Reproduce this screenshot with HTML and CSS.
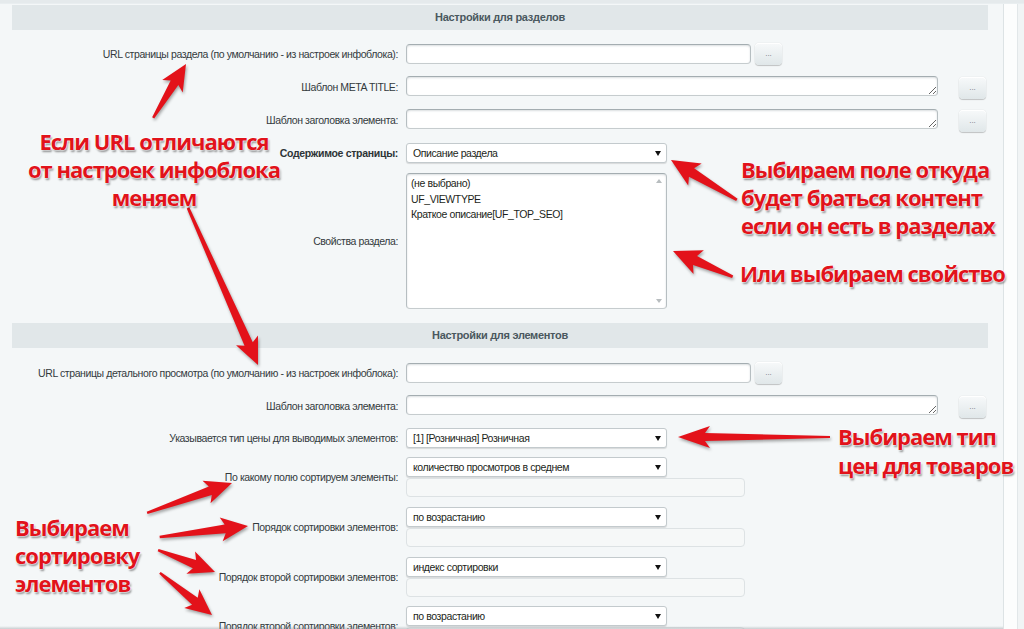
FILE: index.html
```html
<!DOCTYPE html>
<html lang="ru">
<head>
<meta charset="utf-8">
<title>Настройки</title>
<link rel="stylesheet" href="styles.css">
</head>
<body>
<div class="screen">
  <div class="topstrip"></div>
  <div class="body">
    <div class="content">
      <div class="form">
        <div class="heading h1">Настройки для разделов</div>

        <div class="row r-1">
          <div class="label">URL страницы раздела (по умолчанию - из настроек инфоблока):</div>
          <div class="ctrl"><input class="input w-url" type="text"><button class="btn btn-near">...</button></div>
        </div>

        <div class="row r-2">
          <div class="label">Шаблон META TITLE:</div>
          <div class="ctrl top"><textarea class="input area" rows="1"></textarea><button class="btn btn-far">...</button></div>
        </div>

        <div class="row r-3">
          <div class="label">Шаблон заголовка элемента:</div>
          <div class="ctrl top"><textarea class="input area" rows="1"></textarea><button class="btn btn-far">...</button></div>
        </div>

        <div class="row r-4">
          <div class="label bold">Содержимое страницы:</div>
          <div class="ctrl"><div class="select"><span>Описание раздела</span><i class="caret"></i></div></div>
        </div>

        <div class="row r-5">
          <div class="label">Свойства раздела:</div>
          <div class="ctrl">
            <div class="multi">
              <div class="opt">(не выбрано)</div>
              <div class="opt">UF_VIEWTYPE</div>
              <div class="opt">Краткое описание[UF_TOP_SEO]</div>
              <div class="sb"><i class="sb-up"></i><i class="sb-down"></i></div>
            </div>
          </div>
        </div>

        <div class="heading h2">Настройки для элементов</div>

        <div class="row r-6">
          <div class="label">URL страницы детального просмотра (по умолчанию - из настроек инфоблока):</div>
          <div class="ctrl"><input class="input w-url" type="text"><button class="btn btn-near">...</button></div>
        </div>

        <div class="row r-7">
          <div class="label">Шаблон заголовка элемента:</div>
          <div class="ctrl top"><textarea class="input area" rows="1"></textarea><button class="btn btn-far">...</button></div>
        </div>

        <div class="row r-8">
          <div class="label">Указывается тип цены для выводимых элементов:</div>
          <div class="ctrl"><div class="select"><span>[1] [Розничная] Розничная</span><i class="caret"></i></div></div>
        </div>

        <div class="row r-9">
          <div class="label">По какому полю сортируем элементы:</div>
          <div class="ctrl col">
            <div class="select"><span>количество просмотров в среднем</span><i class="caret"></i></div>
            <div class="dis"></div>
          </div>
        </div>

        <div class="row r-10">
          <div class="label">Порядок сортировки элементов:</div>
          <div class="ctrl col">
            <div class="select"><span>по возрастанию</span><i class="caret"></i></div>
            <div class="dis"></div>
          </div>
        </div>

        <div class="row r-11">
          <div class="label">Порядок второй сортировки элементов:</div>
          <div class="ctrl col">
            <div class="select"><span>индекс сортировки</span><i class="caret"></i></div>
            <div class="dis"></div>
          </div>
        </div>

        <div class="row r-12">
          <div class="label">Порядок второй сортировки элементов:</div>
          <div class="ctrl col">
            <div class="select"><span>по возрастанию</span><i class="caret"></i></div>
            <div class="dis"></div>
          </div>
        </div>
      </div>
    </div>
    <div class="side"></div>
  </div>

  <svg class="arrows" width="1024" height="629" viewBox="0 0 1024 629">
    <g fill="#e3121a">
      <path transform="translate(186 64) rotate(121.4)" d="M0,0 L26,-12 L22,-4.5 L63,-1.2 L63,1.2 L22,4.5 L26,12 Z"/>
      <path transform="translate(258 365) rotate(-114)" d="M0,0 L27,-12 L23,-4.5 L172,-1.4 L172,1.4 L23,4.5 L27,12 Z"/>
      <path transform="translate(671 160) rotate(31.2)" d="M0,0 L28,-13 L24,-5 L77,-1.4 L77,1.4 L24,5 L28,13 Z"/>
      <path transform="translate(673 251) rotate(23.4)" d="M0,0 L28,-13 L24,-5 L65,-1.4 L65,1.4 L24,5 L28,13 Z"/>
      <path transform="translate(678 437) rotate(0)" d="M0,0 L32,-11 L27,-4 L152,-1 L152,1 L27,4 L32,11 Z"/>
      <path transform="translate(232 483) rotate(160.6)" d="M0,0 L27,-12 L23,-4.5 L90,-1.2 L90,1.2 L23,4.5 L27,12 Z"/>
      <path transform="translate(248 526) rotate(172.9)" d="M0,0 L27,-12 L23,-4.5 L89,-1.2 L89,1.2 L23,4.5 L27,12 Z"/>
      <path transform="translate(215 572) rotate(-158.9)" d="M0,0 L26,-12 L22,-4.5 L61,-1.2 L61,1.2 L22,4.5 L26,12 Z"/>
      <path transform="translate(212 615) rotate(-141)" d="M0,0 L26,-12 L22,-4.5 L67,-1.2 L67,1.2 L22,4.5 L26,12 Z"/>
    </g>
  </svg>

  <div class="note n-url">Если URL отличаются<br>от настроек инфоблока<br>меняем</div>
  <div class="note n-field">Выбираем поле откуда<br>будет браться контент<br>если он есть в разделах</div>
  <div class="note n-prop">Или выбираем свойство</div>
  <div class="note n-price">Выбираем тип<br>цен для товаров</div>
  <div class="note n-sort">Выбираем<br>сортировку<br>элементов</div>
</div>
</body>
</html>
```

FILE: styles.css
```css
html, body {
  margin: 0;
  padding: 0;
}

body {
  font-family: "Liberation Sans", Arial, sans-serif;
  background: #f4f7f8;
}

.screen {
  position: relative;
  width: 1024px;
  height: 629px;
  overflow: hidden;
  background: #f4f7f8;
}

.screen::after {
  content: "";
  position: absolute;
  left: 0;
  right: 21px;
  bottom: 0;
  height: 3px;
  background: linear-gradient(to bottom, rgba(0, 0, 0, 0), rgba(120, 130, 135, 0.35));
}

.topstrip {
  height: 4px;
  background: #e5eaec;
  border-bottom: 1px solid #e9eef0;
  box-sizing: border-box;
}

.body {
  display: flex;
  height: 625px;
}

.content {
  width: 1003px;
  padding-left: 12px;
  box-sizing: border-box;
}

.form {
  width: 976px;
}

.side {
  flex: 1;
  border-left: 1px solid #dde3e5;
  background: linear-gradient(to right, #fcfdfd 0, #fcfdfd 13px, #e2e7e9 13px, #e2e7e9 14px, #f1f4f5 14px);
}

/* section headings */
.heading {
  height: 25px;
  line-height: 25px;
  background: #e1e7e9;
  text-align: center;
  font-size: 11px;
  font-weight: bold;
  letter-spacing: -0.3px;
  color: #4a585e;
}

.h1 { margin-top: 1px; }
.h2 { margin-top: 14px; }

/* rows */
.row {
  display: grid;
  grid-template-columns: 386px auto;
  column-gap: 8px;
  align-items: center;
}

.label {
  text-align: right;
  font-size: 10.5px;
  letter-spacing: -0.4px;
  line-height: 13px;
  color: #333a3d;
  white-space: nowrap;
}

.label.bold {
  font-weight: bold;
  letter-spacing: -0.3px;
  color: #2d3436;
}

.ctrl {
  display: flex;
  align-items: center;
}

.ctrl.top {
  align-items: flex-start;
}

.ctrl.col {
  flex-direction: column;
  align-items: flex-start;
}

.r-1 { margin-top: 13px; }
.r-2 { margin-top: 11px; }
.r-3 { margin-top: 10px; }
.r-4 { margin-top: 11px; }
.r-5 { margin-top: 10px; }
.r-6 { margin-top: 14px; }
.r-7 { margin-top: 11px; }
.r-8 { margin-top: 10px; }
.r-9 { margin-top: 9px; }
.r-10 { margin-top: 10px; }
.r-11 { margin-top: 10px; }
.r-12 { margin-top: 9px; }

/* inputs */
.input {
  display: block;
  box-sizing: border-box;
  height: 20px;
  margin: 0;
  padding: 0 5px;
  border: 1px solid;
  border-color: #a4adb1 #b6bec1 #c6ccce #b6bec1;
  border-radius: 4px;
  background: #fff;
  box-shadow: inset 0 1px 2px rgba(150, 160, 165, 0.35);
  font-family: inherit;
  font-size: 11px;
  outline: none;
}

.w-url {
  width: 345px;
}

.area {
  width: 532px;
  resize: both;
  overflow: hidden;
}

.btn {
  width: 27px;
  height: 22px;
  padding: 0;
  border: none;
  border-radius: 4px;
  background: linear-gradient(to bottom, #f7f9fa, #e0e7e9);
  box-shadow: 0 1px 1px rgba(0, 0, 0, 0.2), 0 0 1px rgba(0, 0, 0, 0.22), inset 0 1px 0 #ffffff;
  font-family: inherit;
  font-size: 8px;
  line-height: 20px;
  color: #6d777e;
}

.btn-near {
  margin-left: 4px;
}

.btn-far {
  margin-left: 21px;
  margin-top: 1px;
}

/* selects */
.select {
  box-sizing: border-box;
  width: 261px;
  height: 20px;
  display: flex;
  align-items: center;
  justify-content: space-between;
  padding: 0 5px 0 6px;
  border: 1px solid #c3cacd;
  border-radius: 3px;
  background: #fff;
  box-shadow: 0 1px 1px rgba(0, 0, 0, 0.12);
  font-size: 10.5px;
  letter-spacing: -0.4px;
  color: #1c1f20;
}

.caret {
  width: 0;
  height: 0;
  border-left: 3px solid transparent;
  border-right: 3px solid transparent;
  border-top: 5px solid #111;
}

.dis {
  box-sizing: border-box;
  width: 339px;
  height: 19px;
  margin-top: 1px;
  border: 1px solid #dde2e4;
  border-radius: 4px;
  background: #f6f8f8;
}

/* multi-select */
.multi {
  position: relative;
  box-sizing: border-box;
  width: 261px;
  height: 136px;
  padding: 2px 0 0 4px;
  border: 1px solid;
  border-color: #a4adb1 #b6bec1 #c6ccce #b6bec1;
  border-radius: 4px;
  background: #fff;
  box-shadow: inset 0 1px 2px rgba(150, 160, 165, 0.35);
  font-size: 10.5px;
  letter-spacing: -0.4px;
  color: #1c1f20;
}

.opt {
  line-height: 15.5px;
}

.sb {
  position: absolute;
  top: 0;
  right: 0;
  bottom: 0;
  width: 14px;
  display: flex;
  flex-direction: column;
  justify-content: space-between;
  align-items: center;
  padding: 5px 0;
  box-sizing: border-box;
}

.sb-up {
  width: 0;
  height: 0;
  border-left: 3px solid transparent;
  border-right: 3px solid transparent;
  border-bottom: 4px solid #b8bdbf;
}

.sb-down {
  width: 0;
  height: 0;
  border-left: 3px solid transparent;
  border-right: 3px solid transparent;
  border-top: 4px solid #b8bdbf;
}

/* annotations overlay */
.arrows {
  position: absolute;
  top: 0;
  left: 0;
  pointer-events: none;
  filter: drop-shadow(1px 2px 1.5px rgba(0, 0, 0, 0.35));
}

.note {
  position: absolute;
  font-family: "Open Sans", "DejaVu Sans", sans-serif;
  font-weight: 700;
  font-size: 22px;
  letter-spacing: -1px;
  line-height: 28px;
  color: #e1131b;
  white-space: nowrap;
  text-shadow: 0 0 1px #fff, 0 0 2px #fff, 0 0 2px #fff, 1px 2px 2px rgba(0, 0, 0, 0.45);
}

.n-url {
  left: 24px;
  top: 127px;
  width: 260px;
  text-align: center;
}

.n-field {
  left: 741px;
  top: 155px;
}

.n-prop {
  left: 740px;
  top: 259px;
}

.n-price {
  left: 838px;
  top: 422px;
  line-height: 29px;
}

.n-sort {
  left: 15px;
  top: 513px;
}
```
